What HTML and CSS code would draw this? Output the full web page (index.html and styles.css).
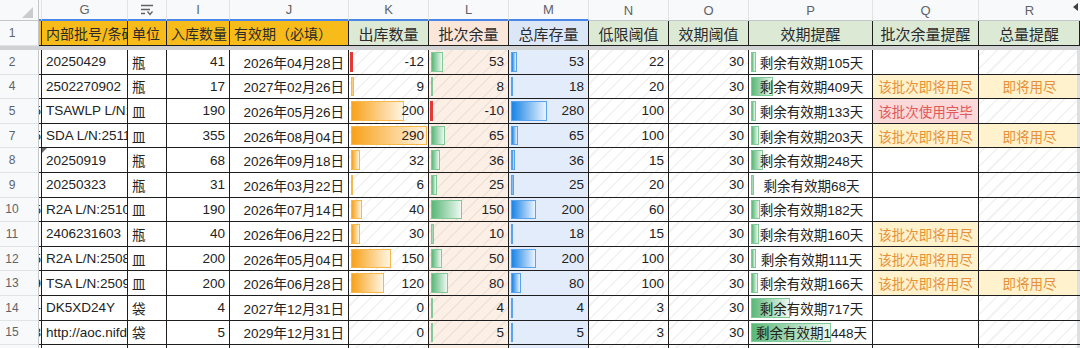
FILE: index.html
```html
<!DOCTYPE html>
<html lang="zh-CN">
<head>
<meta charset="utf-8">
<title>库存表</title>
<link rel="stylesheet" href="styles.css">
</head>
<body>
<div class="sheet">
  <!-- column header row -->
  <div class="ch corner"><svg width="12" height="12" viewBox="0 0 12 12"><polygon points="11,0 11,11 0,11" fill="#c9cbcd"/></svg></div>
  <div class="ch sel"></div>
  <div class="ch sel">G</div>
  <div class="ch sel"><svg class="ficon" width="14" height="13" viewBox="0 0 14 13"><path d="M1 1.5H13M1 5.5H10M1 9.5H5M7.5 7.5L10 10.5L12.5 7.5" fill="none" stroke="#5f6368" stroke-width="1.3"/></svg></div>
  <div class="ch sel">I</div>
  <div class="ch sel">J</div>
  <div class="ch sel">K</div>
  <div class="ch sel">L</div>
  <div class="ch sel">M</div>
  <div class="ch">N</div>
  <div class="ch">O</div>
  <div class="ch">P</div>
  <div class="ch">Q</div>
  <div class="ch last">R<span class="tri"></span></div>

  <!-- row 1 -->
  <div class="rh">1</div>
  <div class="fc or"><span>】</span></div>
  <div class="hd or l">内部批号/条码</div>
  <div class="hd or l">单位</div>
  <div class="hd or l">入库数量</div>
  <div class="hd or l">有效期（必填）</div>
  <div class="hd gr c">出库数量</div>
  <div class="hd pe c">批次余量</div>
  <div class="hd bl c">总库存量</div>
  <div class="hd gr c">低限阈值</div>
  <div class="hd gr c">效期阈值</div>
  <div class="hd gr c">效期提醒</div>
  <div class="hd gr c">批次余量提醒</div>
  <div class="hd gr c">总量提醒</div>

  <div class="band"></div>

  <!-- row 2 -->
  <div class="rh">2</div>
  <div class="fc"><span></span></div>
  <div class="d l">20250429</div>
  <div class="d l">瓶</div>
  <div class="d r">41</div>
  <div class="d r">2026年04月28日</div>
  <div class="d k hatch"><i class="neg"></i><span>-12</span></div>
  <div class="d lq hatch"><i class="gb" style="width:12px"></i><span>53</span></div>
  <div class="d m"><i class="bb" style="width:6px"></i><span>53</span></div>
  <div class="d r hatch">22</div>
  <div class="d r hatch">30</div>
  <div class="d p"><i class="gb" style="width:5px"></i><span>剩余有效期105天</span></div>
  <div class="d q"></div>
  <div class="d rr hatch"></div>

  <!-- row 4 -->
  <div class="rh">4</div>
  <div class="fc"><span></span></div>
  <div class="d l">2502270902</div>
  <div class="d l">瓶</div>
  <div class="d r">17</div>
  <div class="d r">2027年02月26日</div>
  <div class="d k hatch"><i class="ob" style="width:3px"></i><span>9</span></div>
  <div class="d lq hatch"><i class="gb" style="width:2px"></i><span>8</span></div>
  <div class="d m"><i class="bb" style="width:2px"></i><span>18</span></div>
  <div class="d r hatch">20</div>
  <div class="d r hatch">30</div>
  <div class="d p"><i class="gb" style="width:22px"></i><span>剩余有效期409天</span></div>
  <div class="d q warn">该批次即将用尽</div>
  <div class="d rr warn">即将用尽</div>

  <!-- row 5 -->
  <div class="rh">5</div>
  <div class="fc"><span>5</span></div>
  <div class="d l">TSAWLP L/N:250526</div>
  <div class="d l">皿</div>
  <div class="d r">190</div>
  <div class="d r">2026年05月26日</div>
  <div class="d k hatch"><i class="ob" style="width:53px"></i><span>200</span></div>
  <div class="d lq hatch"><i class="neg"></i><span>-10</span></div>
  <div class="d m"><i class="bb" style="width:36px"></i><span>280</span></div>
  <div class="d r hatch">100</div>
  <div class="d r hatch">30</div>
  <div class="d p"><i class="gb" style="width:5px"></i><span>剩余有效期133天</span></div>
  <div class="d q done">该批次使用完毕</div>
  <div class="d rr hatch"></div>

  <!-- row 7 -->
  <div class="rh">7</div>
  <div class="fc"><span>5</span></div>
  <div class="d l">SDA L/N:2511</div>
  <div class="d l">皿</div>
  <div class="d r">355</div>
  <div class="d r">2026年08月04日</div>
  <div class="d k hatch"><i class="ob" style="width:76px"></i><span>290</span></div>
  <div class="d lq hatch"><i class="gb" style="width:14px"></i><span>65</span></div>
  <div class="d m"><i class="bb" style="width:7px"></i><span>65</span></div>
  <div class="d r hatch">100</div>
  <div class="d r hatch">30</div>
  <div class="d p"><i class="gb" style="width:8px"></i><span>剩余有效期203天</span></div>
  <div class="d q warn">该批次即将用尽</div>
  <div class="d rr warn">即将用尽</div>

  <!-- row 8 -->
  <div class="rh">8</div>
  <div class="fc"><span></span></div>
  <div class="d l note">20250919</div>
  <div class="d l">瓶</div>
  <div class="d r">68</div>
  <div class="d r">2026年09月18日</div>
  <div class="d k hatch"><i class="ob" style="width:9px"></i><span>32</span></div>
  <div class="d lq hatch"><i class="gb" style="width:9px"></i><span>36</span></div>
  <div class="d m"><i class="bb" style="width:4px"></i><span>36</span></div>
  <div class="d r hatch">15</div>
  <div class="d r hatch">30</div>
  <div class="d p"><i class="gb" style="width:12px"></i><span>剩余有效期248天</span></div>
  <div class="d q"></div>
  <div class="d rr hatch"></div>

  <!-- row 9 -->
  <div class="rh">9</div>
  <div class="fc"><span></span></div>
  <div class="d l">20250323</div>
  <div class="d l">瓶</div>
  <div class="d r">31</div>
  <div class="d r">2026年03月22日</div>
  <div class="d k hatch"><i class="ob" style="width:2px"></i><span>6</span></div>
  <div class="d lq hatch"><i class="gb" style="width:6px"></i><span>25</span></div>
  <div class="d m"><i class="bb" style="width:3px"></i><span>25</span></div>
  <div class="d r hatch">20</div>
  <div class="d r hatch">30</div>
  <div class="d p"><i class="gb" style="width:3px"></i><span>剩余有效期68天</span></div>
  <div class="d q"></div>
  <div class="d rr hatch"></div>

  <!-- row 10 -->
  <div class="rh">10</div>
  <div class="fc"><span>5</span></div>
  <div class="d l">R2A L/N:2510</div>
  <div class="d l">皿</div>
  <div class="d r">190</div>
  <div class="d r">2026年07月14日</div>
  <div class="d k hatch"><i class="ob" style="width:11px"></i><span>40</span></div>
  <div class="d lq hatch"><i class="gb" style="width:31px"></i><span>150</span></div>
  <div class="d m"><i class="bb" style="width:25px"></i><span>200</span></div>
  <div class="d r hatch">60</div>
  <div class="d r hatch">30</div>
  <div class="d p"><i class="gb" style="width:9px"></i><span>剩余有效期182天</span></div>
  <div class="d q"></div>
  <div class="d rr hatch"></div>

  <!-- row 11 -->
  <div class="rh">11</div>
  <div class="fc"><span></span></div>
  <div class="d l">2406231603</div>
  <div class="d l">瓶</div>
  <div class="d r">40</div>
  <div class="d r">2026年06月22日</div>
  <div class="d k hatch"><i class="ob" style="width:9px"></i><span>30</span></div>
  <div class="d lq hatch"><i class="gb" style="width:3px"></i><span>10</span></div>
  <div class="d m"><i class="bb" style="width:2px"></i><span>18</span></div>
  <div class="d r hatch">15</div>
  <div class="d r hatch">30</div>
  <div class="d p"><i class="gb" style="width:8px"></i><span>剩余有效期160天</span></div>
  <div class="d q warn">该批次即将用尽</div>
  <div class="d rr hatch"></div>

  <!-- row 12 -->
  <div class="rh">12</div>
  <div class="fc"><span>5</span></div>
  <div class="d l">R2A L/N:2508</div>
  <div class="d l">皿</div>
  <div class="d r">200</div>
  <div class="d r">2026年05月04日</div>
  <div class="d k hatch"><i class="ob" style="width:40px"></i><span>150</span></div>
  <div class="d lq hatch"><i class="gb" style="width:11px"></i><span>50</span></div>
  <div class="d m"><i class="bb" style="width:25px"></i><span>200</span></div>
  <div class="d r hatch">100</div>
  <div class="d r hatch">30</div>
  <div class="d p"><i class="gb" style="width:5px"></i><span>剩余有效期111天</span></div>
  <div class="d q warn">该批次即将用尽</div>
  <div class="d rr hatch"></div>

  <!-- row 13 -->
  <div class="rh">13</div>
  <div class="fc"><span>9</span></div>
  <div class="d l">TSA L/N:2509</div>
  <div class="d l">皿</div>
  <div class="d r">200</div>
  <div class="d r">2026年06月28日</div>
  <div class="d k hatch"><i class="ob" style="width:33px"></i><span>120</span></div>
  <div class="d lq hatch"><i class="gb" style="width:17px"></i><span>80</span></div>
  <div class="d m"><i class="bb" style="width:10px"></i><span>80</span></div>
  <div class="d r hatch">100</div>
  <div class="d r hatch">30</div>
  <div class="d p"><i class="gb" style="width:7px"></i><span>剩余有效期166天</span></div>
  <div class="d q warn">该批次即将用尽</div>
  <div class="d rr warn">即将用尽</div>

  <!-- row 14 -->
  <div class="rh">14</div>
  <div class="fc"><span>-</span></div>
  <div class="d l">DK5XD24Y</div>
  <div class="d l">袋</div>
  <div class="d r">4</div>
  <div class="d r">2027年12月31日</div>
  <div class="d k hatch"><span>0</span></div>
  <div class="d lq hatch"><i class="gb" style="width:2px"></i><span>4</span></div>
  <div class="d m"><i class="bb" style="width:2px"></i><span>4</span></div>
  <div class="d r hatch">3</div>
  <div class="d r hatch">30</div>
  <div class="d p"><i class="gb" style="width:39px"></i><span>剩余有效期717天</span></div>
  <div class="d q"></div>
  <div class="d rr hatch"></div>

  <!-- row 15 -->
  <div class="rh">15</div>
  <div class="fc"><span>3</span></div>
  <div class="d l">http://aoc.nifdc.org.cn</div>
  <div class="d l">袋</div>
  <div class="d r">5</div>
  <div class="d r">2029年12月31日</div>
  <div class="d k hatch"><span>0</span></div>
  <div class="d lq hatch"><i class="gb" style="width:2px"></i><span>5</span></div>
  <div class="d m"><i class="bb" style="width:2px"></i><span>5</span></div>
  <div class="d r hatch">3</div>
  <div class="d r hatch">30</div>
  <div class="d p"><i class="gb" style="width:80px"></i><span>剩余有效期1448天</span></div>
  <div class="d q"></div>
  <div class="d rr hatch"></div>

  <!-- row 16 (partially visible) -->
  <div class="rh">16</div>
  <div class="fc"><span></span></div>
  <div class="d"></div>
  <div class="d"></div>
  <div class="d"></div>
  <div class="d"></div>
  <div class="d hatch"></div>
  <div class="d lq"></div>
  <div class="d m"></div>
  <div class="d hatch"></div>
  <div class="d hatch"></div>
  <div class="d"></div>
  <div class="d"></div>
  <div class="d rr hatch"></div>
</div>
</body>
</html>
```

FILE: styles.css
```css
* { box-sizing: border-box; }

html, body {
  margin: 0;
  padding: 0;
  background: #fff;
  overflow: hidden;
}

body {
  width: 1080px;
  height: 348px;
  font-family: "Liberation Sans", Arial, "Noto Sans CJK SC", sans-serif;
  color: #222;
}

.sheet {
  display: grid;
  grid-template-columns: 39px 3px 86px 39px 63px 119px 80px 80px 80px 80px 80px 124px 106px 101px;
  grid-template-rows: 21px 25px 4px repeat(13, 24.6px);
  width: 1080px;
  height: 348px;
  overflow: hidden;
}

/* column letter headers */
.ch {
  background: #f8f9fa;
  color: #5f6368;
  font-size: 13px;
  display: flex;
  align-items: center;
  justify-content: center;
  border-right: 1px solid #e1e3e4;
  border-bottom: 1px solid #c4c7c9;
  position: relative;
}
.ch.sel { border-bottom: 2px solid #4a86e8; }
.ch.corner {
  justify-content: flex-start;
  align-items: flex-start;
  padding: 7px 0 0 22px;
  border-right: 1px solid #c4c7c9;
}
.ch.last { border-right: none; }
.ficon { display: block; margin-top: 1px; }
.tri {
  position: absolute;
  right: 2px;
  top: 3px;
  width: 0;
  height: 0;
  border-top: 4px solid transparent;
  border-bottom: 4px solid transparent;
  border-right: 5px solid #3c4043;
}

/* row numbers */
.rh {
  background: #f8f9fa;
  color: #5f6368;
  font-size: 12px;
  display: flex;
  align-items: center;
  justify-content: center;
  padding-right: 14px;
  border-right: 1px solid #c4c7c9;
  border-bottom: 1px solid #e1e3e4;
}

/* hidden F column sliver */
.fc {
  display: flex;
  justify-content: flex-end;
  align-items: center;
  overflow: hidden;
  white-space: nowrap;
  font-size: 13.5px;
  color: #222;
  border-right: 1px solid #1e1e1e;
  border-bottom: 1px solid #1e1e1e;
  background: #fff;
}
.fc span { flex: none; }
.fc.or { background: #f7bb1a; font-size: 14px; }

/* header row 1 */
.hd {
  font-family: "Noto Sans CJK SC", "Liberation Sans", sans-serif;
  font-size: 15px;
  color: #2b2b2b;
  display: flex;
  align-items: center;
  white-space: nowrap;
  overflow: hidden;
  border-right: 1px solid #1e1e1e;
  border-bottom: 1px solid #1e1e1e;
}
.hd.l { padding-left: 4px; }
.hd.c { justify-content: center; }
.hd.or { background: #f7bb1a; font-size: 14px; }
.hd.gr { background: #dbe9d5; }
.hd.pe { background: #fbe6da; }
.hd.bl { background: #dbe6f7; }

/* frozen divider */
.band {
  grid-column: 1 / -1;
  background: #d0d1d2;
}

/* data cells */
.d {
  font-size: 13.5px;
  color: #222;
  white-space: nowrap;
  overflow: hidden;
  border-right: 1px solid #1e1e1e;
  border-bottom: 1px solid #1e1e1e;
  display: flex;
  align-items: center;
  background-color: #fff;
  position: relative;
}
.d.l { padding-left: 4px; }
.d.r { justify-content: flex-end; padding-right: 4px; }

.hatch {
  background-image: repeating-linear-gradient(-45deg, rgba(0,0,0,0) 0 8px, rgba(0,0,0,0.05) 8px 9.5px);
}

/* bar cells: bar and value share one grid area */
.k, .lq, .m, .p {
  display: grid;
  grid-template-columns: 1fr;
  grid-template-rows: 1fr;
  align-items: center;
}
.k > *, .lq > *, .m > *, .p > * { grid-area: 1 / 1; }
.k span, .lq span, .m span { justify-self: end; padding-right: 4px; }
.p span { justify-self: center; padding-left: 2px; }

.lq { background-color: #fcefe6; }
.m { background-color: #e3ecfb; }

.k i, .lq i, .m i, .p i {
  display: block;
  align-self: stretch;
  justify-self: start;
  margin: 2px 0 2px 2px;
  min-width: 2px;
}
.ob {
  border: 1px solid #f8b749;
  background: linear-gradient(to right, #f8a21b, #fff5e3);
}
.gb {
  border: 1px solid #82c99a;
  background: linear-gradient(to right, #5ab878, #eef8f1);
}
.bb {
  border: 1px solid #5aa3ec;
  background: linear-gradient(to right, #1a84e6, #eaf3fd);
}
.neg {
  width: 3px;
  background: #e53935;
}
.k .neg, .lq .neg { margin-left: 1px; }

/* reminders */
.q, .rr { justify-content: center; }
.warn { background-color: #fff2cc; background-image: none; color: #e69138; }
.done { background-color: #fbd9d9; color: #e0585a; }
.rr { border-right: none; box-shadow: inset -3px 0 0 #dedfe0; }

/* comment marker */
.note::before {
  content: "";
  position: absolute;
  left: 0;
  top: 0;
  width: 0;
  height: 0;
  border-top: 5px solid #6b6b6b;
  border-right: 5px solid transparent;
}
```
